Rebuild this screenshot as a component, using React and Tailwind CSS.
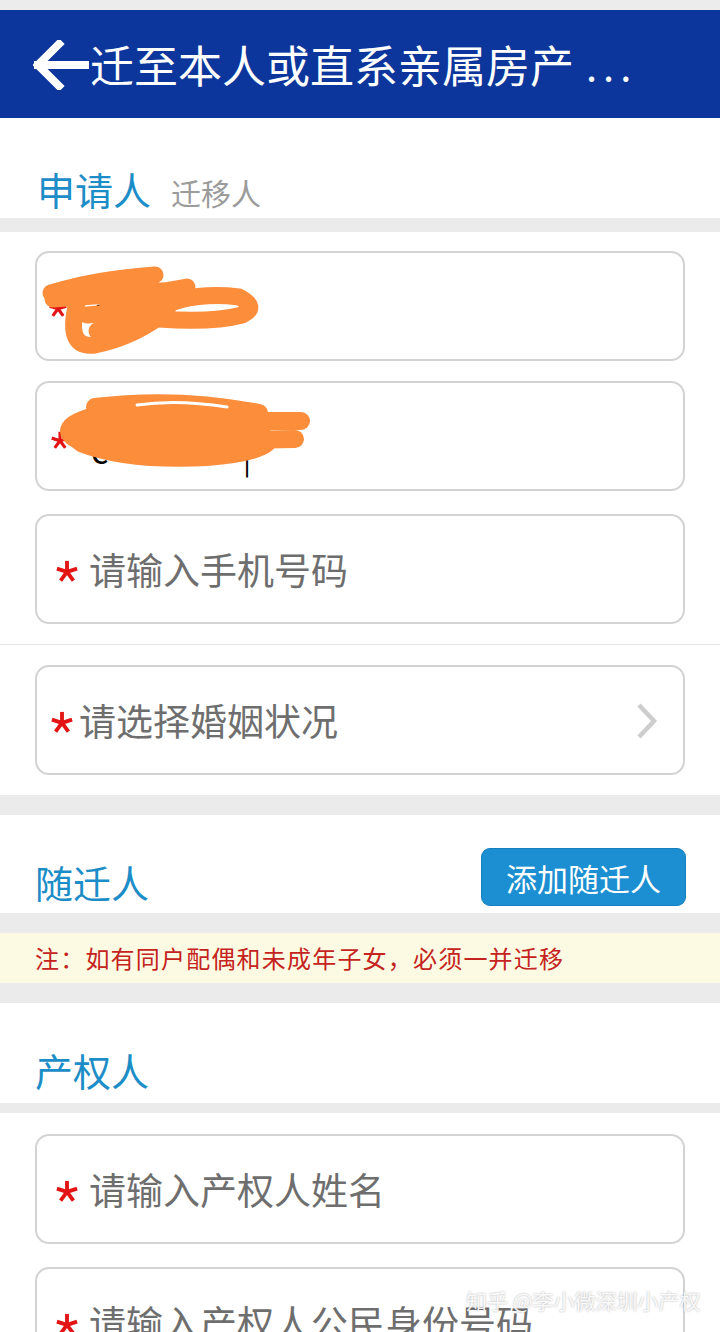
import React from 'react';

const font = "font-['Noto_Sans_CJK_SC','Noto_Sans',sans-serif]";

function Star({ className = '', size = 24 }) {
  // five-armed red asterisk used as "required" marker
  return (
    <svg width={size} height={size} viewBox="0 0 24 24" className={'shrink-0 ' + className}>
      <g stroke="#e31414" strokeWidth="4.2" strokeLinecap="butt">
        <line x1="12" y1="13" x2="12" y2="1" />
        <line x1="12" y1="13" x2="23" y2="9.5" />
        <line x1="12" y1="13" x2="1" y2="9.5" />
        <line x1="12" y1="13" x2="19" y2="22.5" />
        <line x1="12" y1="13" x2="5" y2="22.5" />
      </g>
    </svg>
  );
}

function Box({ children, className = '' }) {
  return (
    <div className={'relative mx-[35px] h-[110px] rounded-[14px] border-2 border-[#d3d3d3] bg-white flex items-center ' + className}>
      {children}
    </div>
  );
}

function Placeholder({ text }) {
  return (
    <>
      <Star size={22} className="ml-[19px] mr-[11px] mt-[4px]" />
      <span className="text-[37px] leading-none text-[#6e6e6e]">{text}</span>
    </>
  );
}

function SectionTitle({ children }) {
  return <span className="text-[38px] leading-none text-[#1c8dc7]">{children}</span>;
}

export default function App() {
  return (
    <div className={'relative w-[720px] h-[1332px] overflow-hidden bg-[#ebebeb] ' + font}>
      {/* status strip */}
      <div className="h-[10px] bg-[#ececec]" />

      {/* top bar */}
      <div className="h-[108px] bg-[#0c369c] flex items-center pl-[33px]">
        <svg width="56" height="50" viewBox="0 0 56 50" className="mr-[1px] mt-[2px]">
          <path d="M26 4 L5 25 L26 46 M5 25 H54" fill="none" stroke="#fff" strokeWidth="8" strokeLinecap="square" />
        </svg>
        <span className="text-[44px] leading-none text-white">迁至本人或直系亲属房产</span>
        <span className="ml-[12px] text-[40px] leading-none text-white tracking-[6px]">...</span>
      </div>

      {/* 申请人 */}
      <div className="h-[100px] bg-white flex items-end pb-[10px] pl-[37px]">
        <SectionTitle>申请人</SectionTitle>
        <span className="ml-[20px] text-[30px] leading-none text-[#9b9b9b] pb-[1px]">迁移人</span>
      </div>

      <div className="h-[14px] bg-[#ebebeb]" />

      <div className="bg-white pt-[19px] pb-[20px] flex flex-col">
        <Box>
          <Star size={18} className="absolute left-[12px] top-[46px]" />
          <span className="absolute left-[58px] top-[46px] text-[34px] leading-none text-black">李</span>
          <svg className="absolute left-0 top-0" width="260" height="110" viewBox="0 0 260 110">
            <g fill="none" stroke="#fb8d3b" strokeWidth="17" strokeLinecap="round" strokeLinejoin="round">
              <path d="M14 40 Q60 26 118 22" />
              <path d="M16 46 L125 38" />
              <path d="M40 50 Q28 96 58 92 Q98 84 130 58" />
              <path d="M50 62 L120 56" />
              <path d="M70 48 L150 34" />
              <path d="M118 58 Q150 38 202 44 Q222 54 205 62 Q175 70 122 66" />
              <path d="M60 78 L100 66" />
            </g>
          </svg>
        </Box>

        <Box className="mt-[20px]">
          <Star size={18} className="absolute left-[14px] top-[48px]" />
          <span className="absolute left-[54px] top-[50px] text-[34px] leading-none text-black">c</span>
          <span className="absolute left-[206px] top-[58px] text-[30px] leading-none text-black">|</span>
          <svg className="absolute left-0 top-0" width="290" height="110" viewBox="0 0 290 110">
            <g fill="none" stroke="#fb8d3b" strokeWidth="18" strokeLinecap="round" strokeLinejoin="round">
              <ellipse cx="128" cy="48" rx="96" ry="22" fill="#fb8d3b" />
              <path d="M58 24 Q140 14 222 30" />
              <path d="M40 52 Q60 34 100 30" />
              <path d="M44 60 Q90 78 170 74 Q220 70 230 60" />
              <path d="M150 38 L264 38" />
              <path d="M160 58 L258 56" />
            </g>
            <path d="M100 22 Q140 16 190 24" fill="none" stroke="#fff" strokeWidth="3" strokeLinecap="round" />
          </svg>
        </Box>

        <Box className="mt-[23px]">
          <Placeholder text="请输入手机号码" />
        </Box>

        <div className="h-px bg-[#e6e6e6] mt-[20px] mb-[20px]" />

        <Box>
          <Star size={22} className="ml-[14px] mr-[6px] mt-[4px]" />
          <span className="text-[37px] leading-none text-[#6e6e6e]">请选择婚姻状况</span>
          <svg width="24" height="38" viewBox="0 0 24 38" className="ml-auto mr-[24px] mt-[2px]">
            <path d="M4 3 L19 19 L4 35" fill="none" stroke="#cdcdcd" strokeWidth="4.5" />
          </svg>
        </Box>
      </div>

      <div className="h-[20px] bg-[#ebebeb]" />

      {/* 随迁人 */}
      <div className="h-[98px] bg-white flex items-center justify-between pl-[35px] pr-[34px]">
        <span className="mt-[38px]"><SectionTitle>随迁人</SectionTitle></span>
        <button className="mt-[26px] h-[58px] w-[205px] rounded-[9px] bg-[#1b8fd1] border border-[#1580be] text-white text-[31px] leading-none flex items-center justify-center">
          添加随迁人
        </button>
      </div>

      <div className="h-[20px] bg-[#ebebeb]" />

      <div className="h-[50px] bg-[#fdfae3] flex items-center pl-[35px]">
        <span className="text-[24px] leading-none text-[#c42320] tracking-[1.2px]">注：如有同户配偶和未成年子女，必须一并迁移</span>
      </div>

      <div className="h-[20px] bg-[#ebebeb]" />

      {/* 产权人 */}
      <div className="h-[100px] bg-white flex items-end pb-[14px] pl-[35px]">
        <SectionTitle>产权人</SectionTitle>
      </div>

      <div className="h-[10px] bg-[#ebebeb]" />

      <div className="bg-white pt-[21px] pb-[40px] flex flex-col">
        <Box>
          <Placeholder text="请输入产权人姓名" />
        </Box>
        <Box className="mt-[23px]">
          <Placeholder text="请输入产权人公民身份号码" />
        </Box>
      </div>

      {/* watermark */}
      <div className="absolute left-[466px] top-[1290px] text-[21px] leading-none text-white/90 [text-shadow:0_0_2px_rgba(0,0,0,0.35)]">
        知乎 @李小微深圳小产权
      </div>
    </div>
  );
}
